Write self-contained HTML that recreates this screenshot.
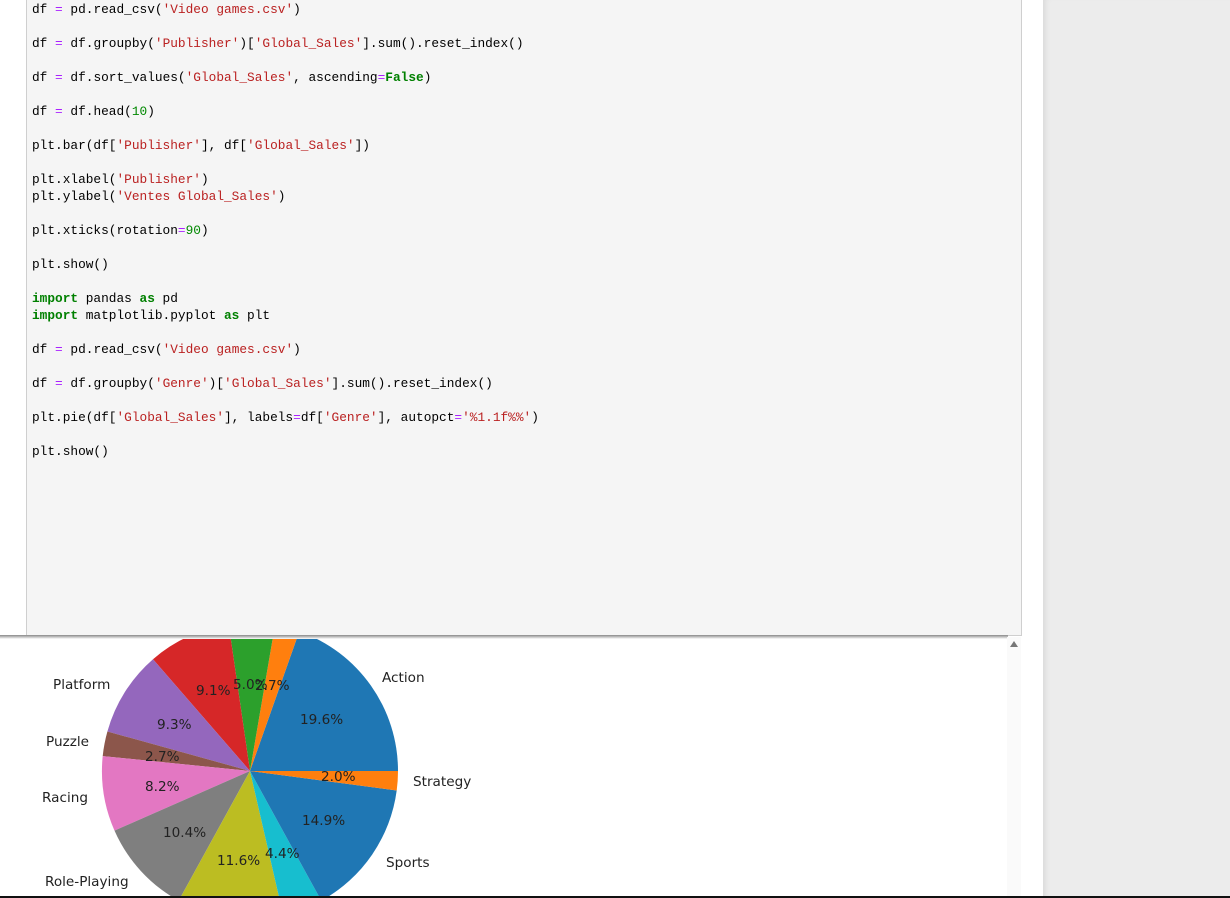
<!DOCTYPE html>
<html><head><meta charset="utf-8"><style>
body{margin:0;width:1230px;height:898px;overflow:hidden;background:#fff;position:relative;font-family:"Liberation Sans",sans-serif}
#right{position:absolute;left:1043px;top:0;width:187px;height:898px;background:#ececec;box-shadow:inset 6px 0 6px -4px #d8d8d8}
#cell{position:absolute;left:26px;top:-1px;width:994px;height:636px;background:#f5f5f5;border:1px solid #cfcfcf;border-top:none}
pre{margin:0;position:absolute;left:5px;top:2px;font-family:"Liberation Mono",monospace;font-size:12.8px;line-height:17px;color:#000}
.s{color:#ba2121}.k{color:#008000;font-weight:bold}.o{color:#aa22ff}.n{color:#008800}
#shadow{position:absolute;left:0;top:635px;width:1008px;height:4px;background:linear-gradient(#888,#fff)}
#scroll{position:absolute;left:1007px;top:637px;width:14px;height:259px;background:#fafafa}
#arrow{position:absolute;left:1010px;top:641px;width:0;height:0;border-left:4px solid transparent;border-right:4px solid transparent;border-bottom:6px solid #777}
#bar{position:absolute;left:0;top:896px;width:1230px;height:2px;background:#111}
svg{position:absolute;left:0;top:0}
svg text{font-family:"DejaVu Sans",sans-serif;font-size:13.6px;fill:#222}
</style></head><body>
<div id="right"></div>
<div id="cell"><pre>df <span class="o">=</span> pd.read_csv(<span class="s">'Video games.csv'</span>)

df <span class="o">=</span> df.groupby(<span class="s">'Publisher'</span>)[<span class="s">'Global_Sales'</span>].sum().reset_index()

df <span class="o">=</span> df.sort_values(<span class="s">'Global_Sales'</span>, ascending<span class="o">=</span><span class="k">False</span>)

df <span class="o">=</span> df.head(<span class="n">10</span>)

plt.bar(df[<span class="s">'Publisher'</span>], df[<span class="s">'Global_Sales'</span>])

plt.xlabel(<span class="s">'Publisher'</span>)
plt.ylabel(<span class="s">'Ventes Global_Sales'</span>)

plt.xticks(rotation<span class="o">=</span><span class="n">90</span>)

plt.show()

<span class="k">import</span> pandas <span class="k">as</span> pd
<span class="k">import</span> matplotlib.pyplot <span class="k">as</span> plt

df <span class="o">=</span> pd.read_csv(<span class="s">'Video games.csv'</span>)

df <span class="o">=</span> df.groupby(<span class="s">'Genre'</span>)[<span class="s">'Global_Sales'</span>].sum().reset_index()

plt.pie(df[<span class="s">'Global_Sales'</span>], labels<span class="o">=</span>df[<span class="s">'Genre'</span>], autopct<span class="o">=</span><span class="s">'%1.1f%%'</span>)

plt.show()</pre></div>
<svg width="1230" height="898">
<defs><clipPath id="c"><rect x="0" y="636" width="1007" height="260"/></clipPath></defs>
<g clip-path="url(#c)">
<path d="M250,771 L398,771 A148,148 0 0,0 299.3,631.4Z" fill="#1f77b4"/>
<path d="M250,771 L299.3,631.4 A148,148 0 0,0 275,625.1Z" fill="#ff7f0e"/>
<path d="M250,771 L275,625.1 A148,148 0 0,0 228.7,624.5Z" fill="#2ca02c"/>
<path d="M250,771 L228.7,624.5 A148,148 0 0,0 153,659.2Z" fill="#d62728"/>
<path d="M250,771 L153,659.2 A148,148 0 0,0 107.4,731.5Z" fill="#9467bd"/>
<path d="M250,771 L107.4,731.5 A148,148 0 0,0 102.7,756.1Z" fill="#8c564b"/>
<path d="M250,771 L102.7,756.1 A148,148 0 0,0 114.5,830.6Z" fill="#e377c2"/>
<path d="M250,771 L114.5,830.6 A148,148 0 0,0 178.7,900.7Z" fill="#7f7f7f"/>
<path d="M250,771 L178.7,900.7 A148,148 0 0,0 283.2,915.2Z" fill="#bcbd22"/>
<path d="M250,771 L283.2,915.2 A148,148 0 0,0 321.3,900.7Z" fill="#17becf"/>
<path d="M250,771 L321.3,900.7 A148,148 0 0,0 396.7,790.5Z" fill="#1f77b4"/>
<path d="M250,771 L396.7,790.5 A148,148 0 0,0 398,771Z" fill="#ff7f0e"/>
</g>
<g>
<text x="382" y="682">Action</text>
<text x="53" y="689">Platform</text>
<text x="46" y="746">Puzzle</text>
<text x="42" y="802">Racing</text>
<text x="45" y="886">Role-Playing</text>
<text x="413" y="786">Strategy</text>
<text x="386" y="867">Sports</text>
<text x="196" y="695">9.1%</text>
<text x="233" y="689">5.0%</text>
<text x="255" y="690">2.7%</text>
<text x="300" y="724">19.6%</text>
<text x="157" y="729">9.3%</text>
<text x="145" y="761">2.7%</text>
<text x="145" y="791">8.2%</text>
<text x="321" y="781">2.0%</text>
<text x="302" y="825">14.9%</text>
<text x="163" y="837">10.4%</text>
<text x="217" y="865">11.6%</text>
<text x="265" y="858">4.4%</text>
</g>
</svg>
<div id="shadow"></div>
<div id="scroll"></div>
<div id="arrow"></div>
<div id="bar"></div>
</body></html>
